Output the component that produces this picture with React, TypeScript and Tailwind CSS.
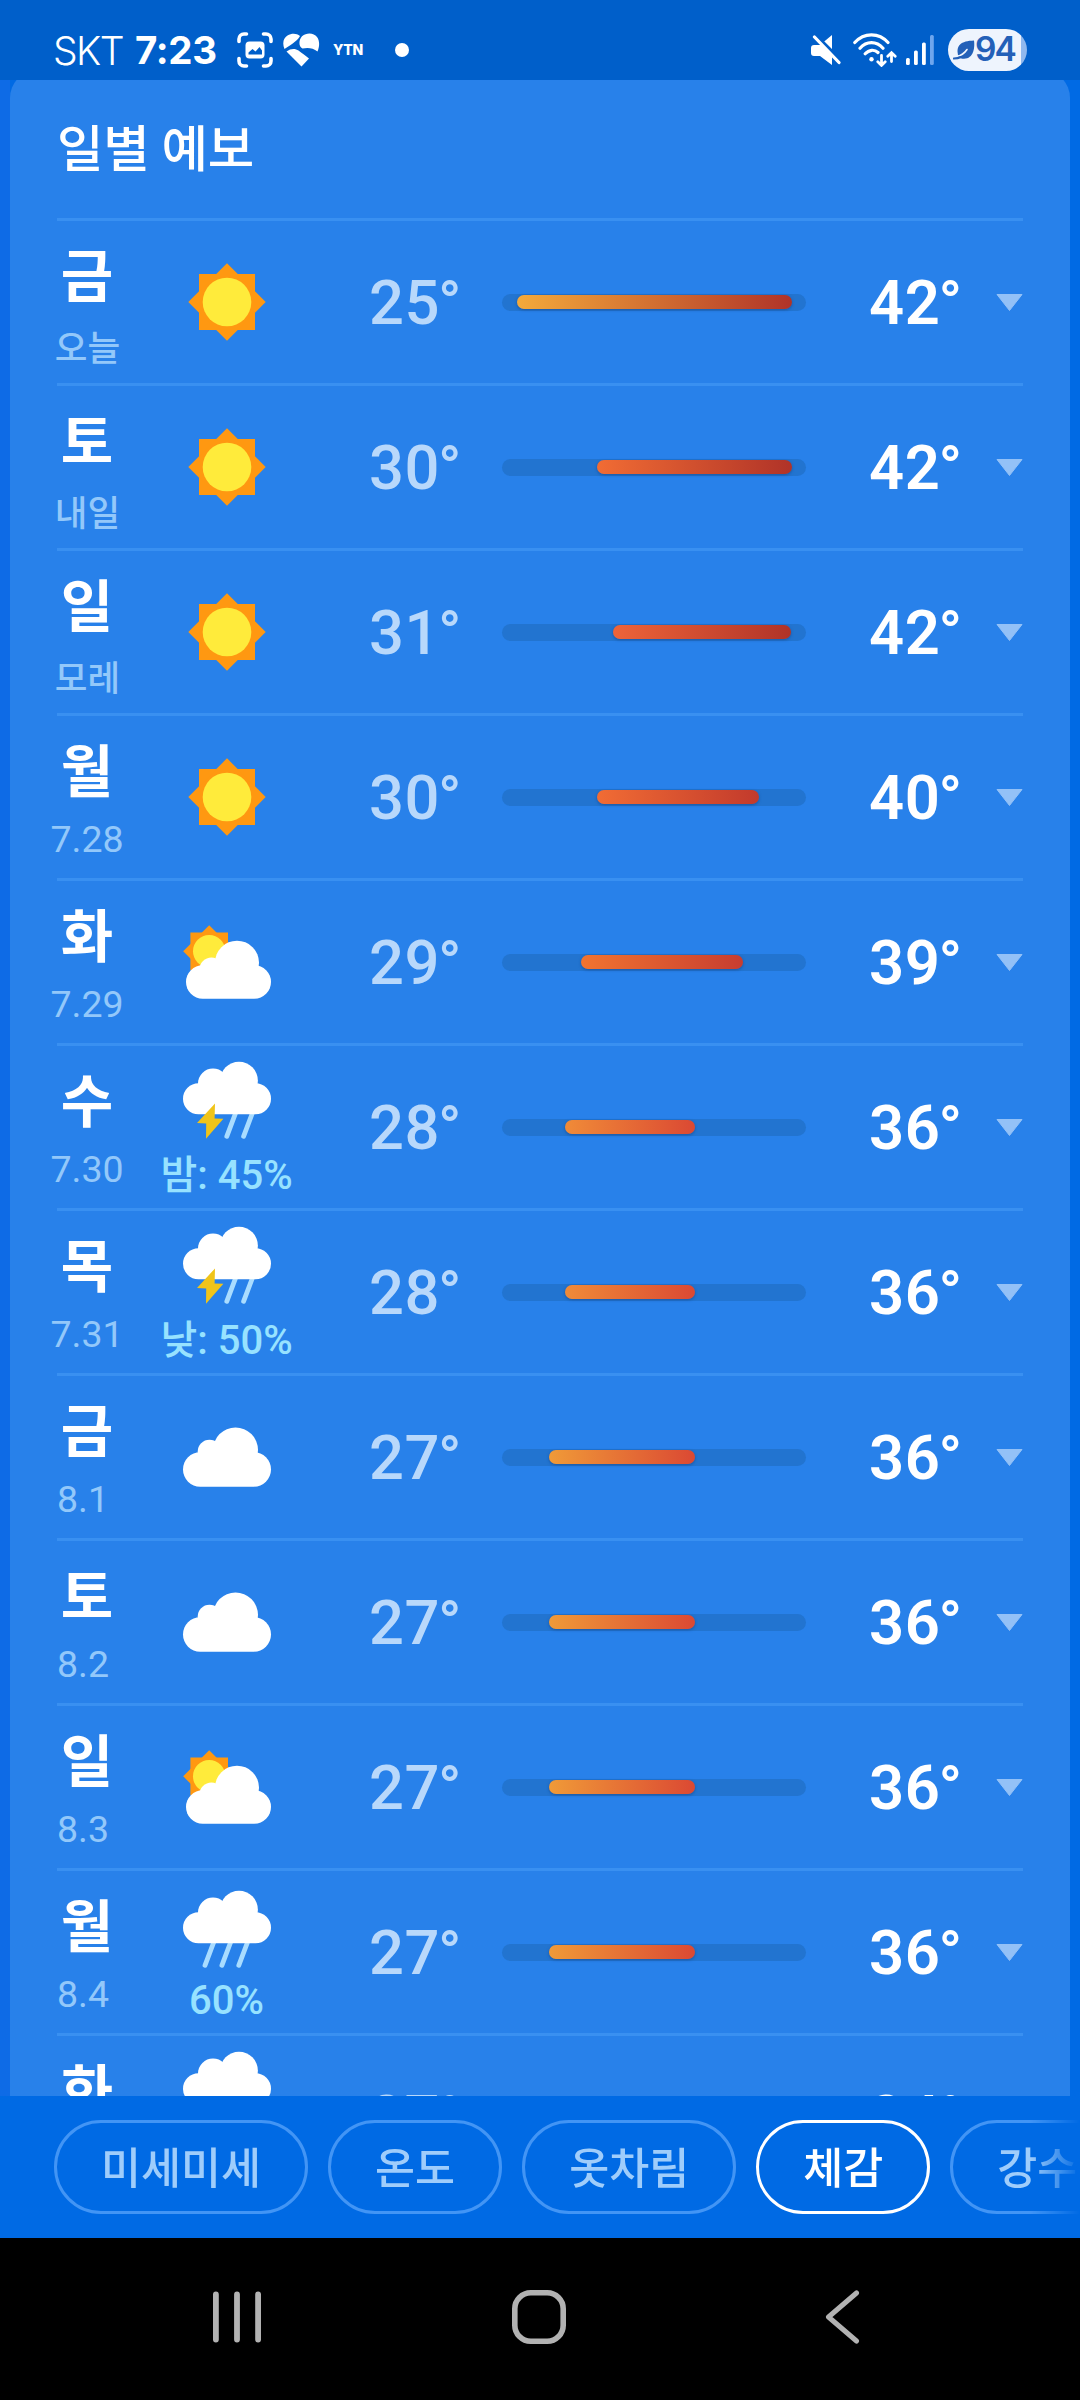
import React from "react";

type Icon = "sun" | "partly" | "storm" | "cloud" | "rain";

type Day = {
  day: string;
  sub?: string;
  icon: Icon;
  label?: string;
  low: number;
  high: number;
};

const days: Day[] = [
  { day: "금", sub: "오늘", icon: "sun", low: 25, high: 42 },
  { day: "토", sub: "내일", icon: "sun", low: 30, high: 42 },
  { day: "일", sub: "모레", icon: "sun", low: 31, high: 42 },
  { day: "월", sub: "7.28", icon: "sun", low: 30, high: 40 },
  { day: "화", sub: "7.29", icon: "partly", low: 29, high: 39 },
  { day: "수", sub: "7.30", icon: "storm", label: "밤: 45%", low: 28, high: 36 },
  { day: "목", sub: "7.31", icon: "storm", label: "낮: 50%", low: 28, high: 36 },
  { day: "금", sub: "8.1", icon: "cloud", low: 27, high: 36 },
  { day: "토", sub: "8.2", icon: "cloud", low: 27, high: 36 },
  { day: "일", sub: "8.3", icon: "partly", low: 27, high: 36 },
  { day: "월", sub: "8.4", icon: "rain", label: "60%", low: 27, high: 36 },
  { day: "화", icon: "rain", low: 27, high: 34 },
];

const tempColor: Record<number, string> = {
  25: "#f4aa3b",
  27: "#f09a38",
  28: "#f08b38",
  29: "#f17430",
  30: "#f16c34",
  31: "#ee6439",
  34: "#e04c33",
  36: "#db4933",
  39: "#c73d30",
  40: "#c23a2c",
  42: "#b03328",
};

function Star({ cx, cy, square, tip, disc }: { cx: number; cy: number; square: number; tip: number; disc: number }) {
  return (
    <g>
      <rect x={cx - square} y={cy - square} width={square * 2} height={square * 2} fill="#ff9811" />
      <path d={`M${cx} ${cy - tip}L${cx + tip} ${cy}L${cx} ${cy + tip}L${cx - tip} ${cy}Z`} fill="#ff9811" />
      <circle cx={cx} cy={cy} r={disc} fill="#ffeb3b" />
    </g>
  );
}

function RainCloud() {
  return (
    <g fill="#fff">
      <circle cx="56" cy="18.7" r="18.9" />
      <circle cx="30" cy="21.5" r="15" />
      <rect x="0" y="21.2" width="88" height="31" rx="15.5" />
    </g>
  );
}

function WeatherIcon({ icon }: { icon: Icon }) {
  return (
    <svg className="block h-[78px] w-[88px] shrink-0 overflow-visible" viewBox="0 0 88 78">
      {icon === "sun" && <Star cx={44} cy={39} square={28} tip={38.7} disc={24.3} />}
      {icon === "partly" && (
        <>
          <Star cx={26.2} cy={28.3} square={18.8} tip={26} disc={16.2} />
          <g fill="#fff">
            <circle cx="54" cy="39.7" r="22" />
            <circle cx="28.5" cy="46.5" r="12" />
            <rect x="3" y="42.3" width="85" height="33.4" rx="16.7" />
          </g>
        </>
      )}
      {icon === "cloud" && (
        <g fill="#fff">
          <circle cx="52.5" cy="32" r="22.5" />
          <circle cx="26.5" cy="33.5" r="11.8" />
          <rect x="0" y="34.2" width="88" height="34.5" rx="17.2" />
        </g>
      )}
      {icon === "storm" && (
        <>
          <g stroke="#a9dcff" strokeWidth="4.8" strokeLinecap="round">
            <path d="M53 50L43.8 74.3M69.8 50L60.6 74.3" />
          </g>
          <RainCloud />
          <path d="M32 41.4L31.6 56.6L40.4 56.8L23 76.8L23.2 61.4L14 61Z" fill="#f0c419" />
        </>
      )}
      {icon === "rain" && (
        <>
          <g stroke="#a9dcff" strokeWidth="4.8" strokeLinecap="round">
            <path d="M31.2 50L22 74.3M48.1 50L38.9 74.3M65 50L55.8 74.3" />
          </g>
          <RainCloud />
        </>
      )}
    </svg>
  );
}

function TempBar({ low, high }: { low: number; high: number }) {
  const left = 14.5 + (low - 25) * 16.15;
  const right = 289.5 - (42 - high) * 16.15;
  return (
    <div className="flex h-[17px] w-[304px] items-center rounded-full bg-[#2274d0]">
      <div
        className="h-[14px] rounded-full shadow-[0_1px_3px_rgba(20,60,120,0.55)]"
        style={{
          marginLeft: left,
          width: right - left,
          background: `linear-gradient(to right, ${tempColor[low]}, ${tempColor[high]})`,
        }}
      />
    </div>
  );
}

function subClass(sub: string) {
  if (/[가-힣]/.test(sub)) return "mt-[15px] ml-px h-[44px] text-[35.5px] leading-[44px] font-[450] text-[#93c8fa]";
  if (sub.length === 3) return "mt-[10px] self-start h-[44px] text-[37.5px] leading-[44px] text-[#93c8fa]";
  return "mt-[10px] h-[44px] text-[37.5px] leading-[44px] text-[#93c8fa]";
}

function Row({ d }: { d: Day }) {
  const wet = d.icon === "storm" || d.icon === "rain";
  const iconPad = !wet ? "pt-[42px]" : d.label === "60%" ? "pt-[20px]" : "pt-[16px]";
  const gap = d.label === "60%" ? "mt-[9px]" : "mt-[13px]";
  return (
    <div className="flex h-[165px] shrink-0 border-t-[3px] border-[#3990f1]">
      <div className="flex w-[60px] flex-col items-center whitespace-nowrap">
        <div className="mt-[23px] h-[68px] text-[57px] leading-[68px] font-bold text-white">{d.day}</div>
        {d.sub && <div className={subClass(d.sub)}>{d.sub}</div>}
      </div>
      <div className={`flex w-[220px] flex-col items-center ${iconPad}`}>
        <WeatherIcon icon={d.icon} />
        {d.label && (
          <div className={`-ml-px h-[46px] text-[40px] leading-[46px] font-medium whitespace-nowrap text-[#97e2ff] ${gap}`}>{d.label}</div>
        )}
      </div>
      <div className="flex h-[162px] flex-1 items-center">
        <div className="ml-[31px] w-[134px] pt-[2px] pl-px text-[61.5px] leading-[70px] font-medium tracking-[0.6px] text-[#b8d8fb]">
          {d.low}
          <span className="-ml-[2px]">°</span>
        </div>
        <TempBar low={d.low} high={d.high} />
        <div className="ml-[63px] w-[127px] pt-[2px] text-[61.5px] leading-[70px] font-semibold tracking-[0.6px] text-white">
          {d.high}
          <span className="-ml-[2px]">°</span>
        </div>
        <svg className="h-[17px] w-[27px]" viewBox="0 0 27 17">
          <path d="M1 0.5H26L13.5 16.5Z" fill="#93c1f7" stroke="#93c1f7" strokeLinejoin="round" />
        </svg>
      </div>
    </div>
  );
}

function StatusBar() {
  return (
    <div className="flex h-20 shrink-0 items-center bg-[#005fca] pt-5 text-white">
      <div className="ml-[53px] w-[82px] font-[Inter] text-[39px] leading-none font-[340] tracking-[-1.6px]">SKT</div>
      <div className="w-[102px] font-[Inter] text-[38.5px] leading-none font-bold tracking-[-0.3px]">7:23</div>
      <svg className="h-[36px] w-[36px]" viewBox="0 0 36 36" fill="none">
        <g stroke="#fff" strokeWidth="3.6" strokeLinecap="round">
          <path d="M2 9.5V7a5 5 0 0 1 5-5h2.5M26.5 2H29a5 5 0 0 1 5 5v2.5M34 26.5V29a5 5 0 0 1-5 5h-2.5M9.5 34H7a5 5 0 0 1-5-5v-2.5" />
        </g>
        <rect x="8.5" y="9.5" width="19" height="17" rx="4" fill="#fff" />
        <path d="M11.5 22.5v-2l4-3.5 3 2.5 4-4.5 2.5 3.5v4z" fill="#005fca" />
      </svg>
      <svg className="ml-[10px] h-[34px] w-[37px]" viewBox="0 0 37 34">
        {/* left lobe */}
        <path d="M1.5 16C-1 10 0.500 5 4.500 2.600C8.500 0 13.500 0 17 3C15.500 6.500 10 10.500 1.500 16Z" fill="#fff" />
        {/* right lobe */}
        <path d="M19 3.200C24 -0.800 31 0 34 4C37 8 36.500 14 34.500 18.500C30 14.500 24 14.500 19.500 15.500C15 13 16 6.500 19 3.200Z" fill="#fff" />
        {/* lower stem */}
        <path d="M3.500 18.500C8 15 12.500 15.500 15.500 17.500C19 20 22 22.500 26 25.500L18.500 33.500Z" fill="#fff" />
      </svg>
      <div className="ml-[13px] w-[62px] font-[Inter] text-[14px] leading-none font-extrabold tracking-[-0.3px]">YTN</div>
      <div className="h-[14px] w-[14px] rounded-full bg-white" />
      <svg className="ml-auto h-[30px] w-[30px] shrink-0" viewBox="0 0 30 30">
        <path d="M0 13a3 3 0 0 1 3-3h6L21 0v30L9 21H3a3 3 0 0 1-3-3z" fill="#fff" />
        <path d="M2 -2.500L32.500 28" stroke="#005fca" strokeWidth="3.400" />
        <path d="M3.500 2L28 27.500" stroke="#fff" strokeWidth="3.200" strokeLinecap="round" />
      </svg>
      <svg className="ml-[12px] h-[34px] w-[44px] shrink-0" viewBox="0 0 44 34" fill="none" stroke="#fff" strokeWidth="3.200" strokeLinecap="round">
        <path d="M1.800 9.500C11 -0.800 26 -0.800 35 9.500M7 15.200C13.500 7.700 23.500 7.700 30 15.200M12.200 20.800C16 16.500 21.500 16.200 25 19.500" />
        <circle cx="18.500" cy="26.200" r="2.200" fill="#fff" stroke="none" />
        <path d="M28.500 22.500V32M24.800 28.800L28.500 32.400L32.200 28.800M38.500 28.500V20M34.800 23.200L38.500 19.600L42.200 23.200" strokeWidth="2.800" />
      </svg>
      <svg className="ml-[9px] h-[30px] w-[28px] shrink-0" viewBox="0 0 28 30" fill="#fff">
        <rect x="0" y="23" width="3.800" height="7" rx="1.500" />
        <rect x="8" y="15.500" width="3.800" height="14.500" rx="1.500" />
        <rect x="16" y="7.500" width="3.800" height="22.500" rx="1.500" />
        <rect x="24" y="0" width="3.800" height="30" rx="1.500" fill="#6ea6ee" />
      </svg>
      <div className="mr-[53px] ml-[14px] flex h-[42px] w-[79px] shrink-0 items-center overflow-hidden rounded-full bg-[linear-gradient(to_right,#eef4fd_73px,#8fb8ee_73px)] pl-[5px] text-[#2360b8]">
        <svg className="h-[20px] w-[22px] shrink-0" viewBox="0 0 22 20">
          <path d="M21 0.500C22 8 20.500 18.500 11 18.800C8.500 18.800 6.500 18 5.500 17C2 5 8 1 21 0.500Z" fill="#2360b8" />
          <path d="M4 16.200C9 15.500 12 12.500 14 9.500" fill="none" stroke="#eef4fd" strokeWidth="1.600" strokeLinecap="round" />
          <path d="M0.800 18.500C4 18.500 6 18 8 17" fill="none" stroke="#2360b8" strokeWidth="2" strokeLinecap="round" />
        </svg>
        <div className="font-[Inter] text-[33.5px] leading-none font-semibold tracking-[-2px]">94</div>
      </div>
    </div>
  );
}

const chips = ["미세미세", "온도", "옷차림", "체감", "강수"];

export default function App() {
  return (
    <div className="flex h-[2400px] w-[1080px] flex-col overflow-hidden bg-[#006ae4] font-[Roboto,'Noto_Sans_CJK_KR',sans-serif]">
      <StatusBar />
      <div className="h-[2016px] shrink-0 overflow-hidden bg-[linear-gradient(to_right,#0e6be6_10px,#006ae4_10px)] px-[10px]">
        <div className="-mt-[10px] h-[2040px] rounded-t-[28px] bg-[#2881ea] px-[47px] pt-[10px]">
          <h1 className="h-[138px] pt-[33px] text-[50.5px] leading-[74px] font-medium tracking-[-0.3px] text-white">일별 예보</h1>
          {days.map((d) => (
            <Row key={`${d.day}${d.sub ?? ""}`} d={d} />
          ))}
        </div>
      </div>
      <div className="flex h-[142px] shrink-0 gap-5 overflow-hidden pt-6 pl-[54px] [mask-image:linear-gradient(to_right,#000_1030px,transparent_1080px)]">
        {chips.map((c) => (
          <div
            key={c}
            className={
              c === "체감"
                ? "flex h-[94px] shrink-0 items-center rounded-full border-[3px] border-white px-[44px] pt-[5px] text-[43.5px] leading-[60px] font-medium text-white"
                : "flex h-[94px] shrink-0 items-center rounded-full border-[3px] border-[#4295f5] px-[44px] pt-[5px] text-[43.5px] leading-[60px] font-[450] text-[#9fcdfb]"
            }
          >
            {c}
          </div>
        ))}
      </div>
      <div className="flex h-[162px] shrink-0 items-center bg-black pb-[4px]">
        <svg className="ml-[213px] h-[54px] w-[48px]" viewBox="0 0 48 54" stroke="#b2b2b2" strokeWidth="5.800" strokeLinecap="round">
          <path d="M2.900 4.500V49.500M24 4.500V49.500M45.100 4.500V49.500" />
        </svg>
        <svg className="ml-[251px] h-[54px] w-[54px]" viewBox="0 0 54 54">
          <rect x="2.800" y="2.800" width="48.400" height="48.400" rx="16" fill="none" stroke="#b2b2b2" strokeWidth="5.600" />
        </svg>
        <svg className="ml-[259px] h-[54px] w-[35px]" viewBox="0 0 35 54" fill="none" stroke="#b2b2b2" strokeWidth="5" strokeLinecap="round" strokeLinejoin="round">
          <path d="M31.500 3L3.500 27L31.500 51" />
        </svg>
      </div>
    </div>
  );
}
